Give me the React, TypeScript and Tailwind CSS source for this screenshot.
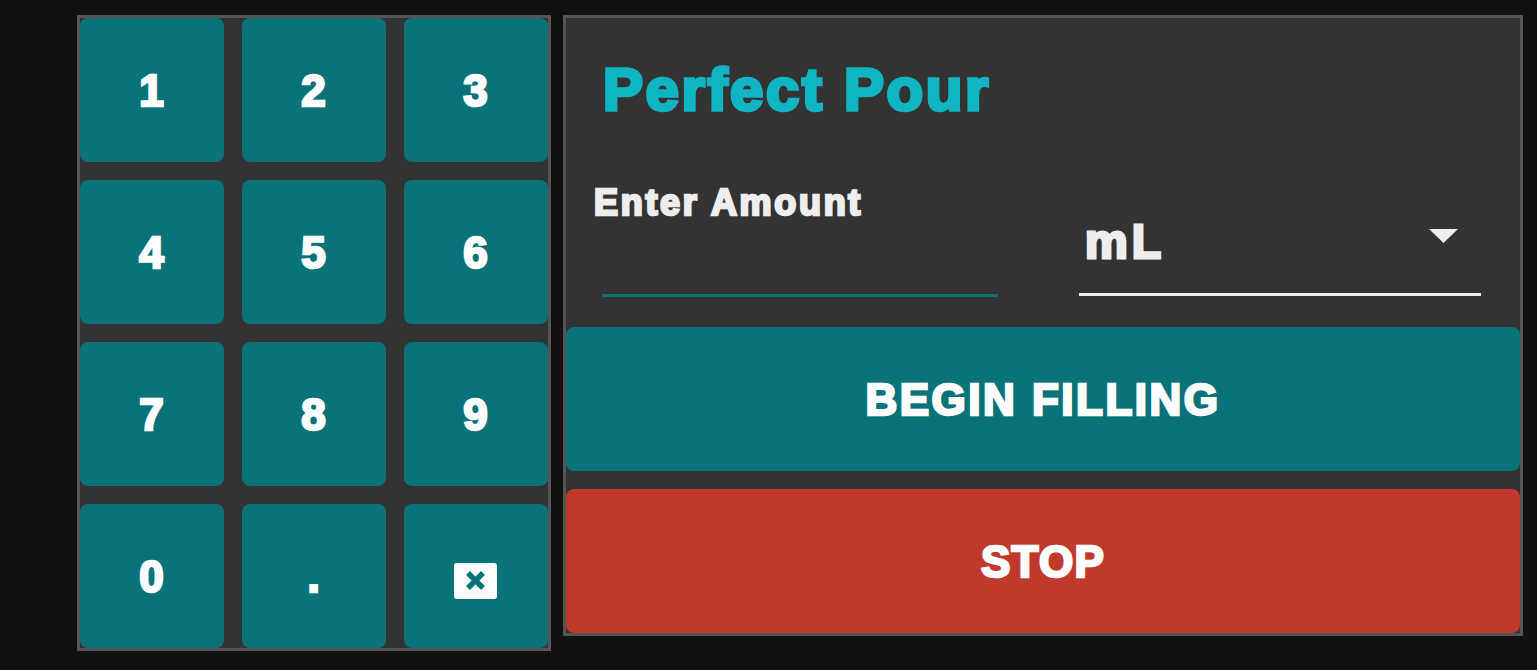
import React from 'react'

const keys = ['1', '2', '3', '4', '5', '6', '7', '8', '9', '0', '.']

const App: React.FC = () => {
  return (
    <div className="flex items-start gap-[12px] min-h-[670px] bg-[#111111] pl-[77px] pt-[15px] font-['Liberation_Sans',Arial,sans-serif] font-bold [-webkit-text-stroke:2.5px_currentColor]">
      {/* Keypad */}
      <div className="grid grid-cols-[144px_144px_144px] auto-rows-[144px] gap-[18px] border-[3px] border-[#555555] bg-[#333333]">
        {keys.map((key) => (
          <button key={key} className="flex items-center justify-center rounded-[8px] bg-[#0a7279] pt-[2px] pr-[1px] text-[44px] leading-none text-white">
            {key}
          </button>
        ))}
        <button className="flex items-center justify-center rounded-[8px] bg-[#0a7279] pt-[10px] pr-[1px]">
          <svg width="43" height="36" viewBox="0 0 43 36">
            <rect width="43" height="36" rx="3" fill="#ffffff" />
            <path d="M14 10l15 15M29 10l-15 15" stroke="#0a7279" strokeWidth="5.500" fill="none" />
          </svg>
        </button>
      </div>

      {/* Filling panel */}
      <div className="flex w-[960px] flex-col border-[3px] border-[#555555] bg-[#333333]">
        <h1 className="pl-[37px] pt-[42px] text-[60px] leading-[60px] text-[#10b5c4] tracking-[2.600px] [-webkit-text-stroke:3.500px_currentColor]">Perfect Pour</h1>
        <div className="flex items-start pt-[63px]">
          <div className="flex w-[513px] flex-col">
            <label className="pl-[28px] text-[36px] leading-[40px] text-[#eeeeee] tracking-[2.700px]">Enter Amount</label>
            <div className="ml-[36px] mt-[71px] h-[3px] w-[396px] bg-[#0a7279]" />
          </div>
          <div className="flex w-[402px] flex-col">
            <div className="flex h-[110px] items-start justify-between pl-[6px] pr-[23px] pt-[31px] text-[#eeeeee]">
              <span className="text-[48px] leading-[56px] tracking-[4px] [-webkit-text-stroke:3px_currentColor]">mL</span>
              <svg width="29" height="14" viewBox="0 0 29 14" className="mt-[15px]">
                <path d="M0 0h29L14.500 14z" fill="#eeeeee" />
              </svg>
            </div>
            <div className="h-[3px] bg-[#eeeeee]" />
          </div>
        </div>
        <div className="flex flex-col gap-[18px] pt-[30px]">
          <button className="flex h-[144px] items-center justify-center rounded-[8px] bg-[#0a7279] pt-[2px] text-[44px] tracking-[2.500px] text-white">
            BEGIN FILLING
          </button>
          <button className="flex h-[144px] items-center justify-center rounded-[8px] bg-[#c0392b] pt-[2px] text-[44px] tracking-[1.300px] text-white">
            STOP
          </button>
        </div>
      </div>
    </div>
  )
}

export default App
